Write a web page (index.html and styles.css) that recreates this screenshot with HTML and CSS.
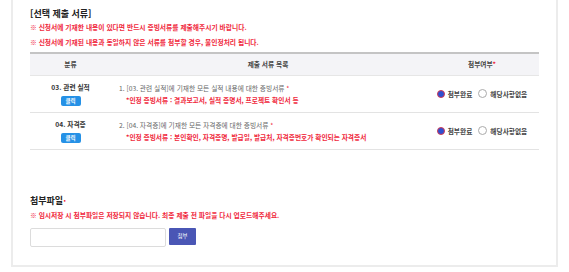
FILE: index.html
```html
<!DOCTYPE html>
<html lang="ko">
<head>
    <meta charset="UTF-8">
    <meta name="viewport" content="width=device-width, initial-scale=1.0">
    <title>선택 제출 서류</title>
    <link rel="stylesheet" href="styles.css">
</head>
<body>
    <div class="panel">
        <h2 class="section-title">[선택 제출 서류]</h2>
        <p class="notice first">※ 신청서에 기재한 내용이 있다면 반드시 증빙서류를 제출해주시기 바랍니다.</p>
        <p class="notice">※ 신청서에 기재된 내용과 동일하지 않은 서류를 첨부할 경우, 불인정처리 됩니다.</p>

        <table class="doc-table">
            <colgroup>
                <col class="col-cat">
                <col>
                <col class="col-check">
            </colgroup>
            <thead>
                <tr>
                    <th>분류</th>
                    <th>제출 서류 목록</th>
                    <th>첨부여부<span class="req">*</span></th>
                </tr>
            </thead>
            <tbody>
                <tr>
                    <td class="cat">
                        <div class="cat-name">03. 관련 실적</div>
                        <button class="btn-click">클릭</button>
                    </td>
                    <td class="docs">
                        <div class="doc-line">1. [03. 관련 실적]에 기재한 모든 실적 내용에 대한 증빙서류 <span class="req">*</span></div>
                        <div class="doc-sub">*인정 증빙서류 : 결과보고서, 실적 증명서, 프로젝트 확인서 등</div>
                    </td>
                    <td class="check">
                        <div class="radios">
                            <label class="radio"><span class="dot on"></span>첨부완료</label>
                            <label class="radio"><span class="dot"></span>해당사항없음</label>
                        </div>
                    </td>
                </tr>
                <tr>
                    <td class="cat">
                        <div class="cat-name">04. 자격증</div>
                        <button class="btn-click">클릭</button>
                    </td>
                    <td class="docs">
                        <div class="doc-line">2. [04. 자격증]에 기재한 모든 자격증에 대한 증빙서류 <span class="req">*</span></div>
                        <div class="doc-sub">*인정 증빙서류 : 본인확인, 자격증명, 발급일, 발급처, 자격증번호가 확인되는 자격증서</div>
                    </td>
                    <td class="check">
                        <div class="radios">
                            <label class="radio"><span class="dot on"></span>첨부완료</label>
                            <label class="radio"><span class="dot"></span>해당사항없음</label>
                        </div>
                    </td>
                </tr>
            </tbody>
        </table>

        <h3 class="attach-title">첨부파일<span class="req">·</span></h3>
        <p class="notice attach-note">※ 임시저장 시 첨부파일은 저장되지 않습니다. 최종 제출 전 파일을 다시 업로드해주세요.</p>
        <div class="file-row">
            <input type="text" class="file-input">
            <button class="btn-attach">첨부</button>
        </div>
    </div>
</body>
</html>
```

FILE: styles.css
```css
body {
    margin: 0;
    background: #fff;
    font-family: "Noto Sans CJK KR", "Noto Sans", sans-serif;
    color: #333;
}

.panel {
    margin-left: 11px;
    width: 509px;
    padding: 8px 17px 18px 17px;
    border: 2px solid #ececec;
    border-top: none;
}

.section-title {
    margin: 0;
    font-size: 9px;
    line-height: 11px;
    font-weight: bold;
    color: #222;
}

.notice {
    margin: 5.5px 0 0;
    font-size: 6.75px;
    line-height: 9px;
    font-weight: bold;
    color: #f0283c;
}

.notice.first {
    margin-top: 4px;
}

.req {
    color: #f0283c;
}

/* 서류 테이블 */
.doc-table {
    width: 100%;
    margin-top: 5px;
    border-collapse: collapse;
    table-layout: fixed;
    border-top: 2px solid #c4c4c4;
    font-size: 6.7px;
}

.col-cat {
    width: 81px;
}

.col-check {
    width: 114px;
}

.doc-table th {
    height: 21px;
    padding: 0;
    background: #f4f4f7;
    border-bottom: 1px solid #e6e6e6;
    font-weight: bold;
    color: #444;
}

.doc-table td {
    height: 36px;
    padding: 0;
    border-bottom: 1px solid #e3e3e3;
    vertical-align: middle;
}

.cat {
    text-align: center;
}

.cat-name {
    line-height: 12px;
    font-weight: bold;
    color: #333;
}

.btn-click {
    display: block;
    margin: 3px auto 0;
    width: 20px;
    height: 10px;
    padding: 0;
    border: none;
    border-radius: 2px;
    background: #2591e6;
    color: #fff;
    font-family: inherit;
    font-size: 5.5px;
    font-weight: bold;
}

.docs {
    padding-left: 8px !important;
}

.doc-line {
    line-height: 12px;
    color: #666;
}

.doc-sub {
    padding-left: 7px;
    line-height: 12px;
    font-weight: bold;
    color: #f0283c;
}

.radios {
    display: flex;
    justify-content: center;
    gap: 6px;
}

.radio {
    display: flex;
    align-items: center;
    gap: 3px;
    color: #444;
    font-weight: bold;
}

.dot {
    width: 7px;
    height: 7px;
    border: 1px solid #aaa;
    border-radius: 50%;
    background: #fff;
}

.dot.on {
    border: 1.5px solid #d33a55;
    width: 6px;
    height: 6px;
    background: #2f4fd0;
}

/* 첨부파일 */
.attach-title {
    margin: 45px 0 0;
    font-size: 9px;
    line-height: 12px;
    font-weight: bold;
    color: #222;
}

.attach-note {
    margin-top: 4.5px;
}

.file-row {
    display: flex;
    align-items: flex-start;
    gap: 3px;
    margin-top: 7.5px;
}

.file-input {
    width: 134px;
    height: 17px;
    padding: 0;
    border: 1px solid #dcdcdc;
    border-radius: 2px;
    box-sizing: content-box;
}

.btn-attach {
    width: 27px;
    height: 17px;
    padding: 0;
    border: none;
    border-radius: 1px;
    background: #4a56b5;
    color: #fff;
    font-family: inherit;
    font-size: 5.5px;
}
```
